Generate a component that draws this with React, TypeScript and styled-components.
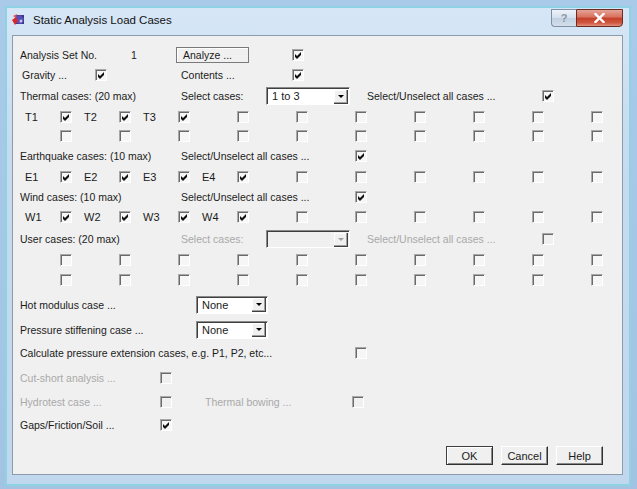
import React from 'react';
import styled, { createGlobalStyle } from 'styled-components';

const GlobalStyle = createGlobalStyle`
  html, body {
    margin: 0;
    padding: 0;
  }
  body {
    width: 637px;
    height: 489px;
    overflow: hidden;
    background: #a6c6e6;
    font-family: "Liberation Sans", Arial, sans-serif;
  }
`;

const Outer = styled.div`
  width: 637px;
  height: 489px;
  box-sizing: border-box;
  padding: 6px 6px 3px 5px;
  background: linear-gradient(180deg, #aacaea 0%, #a3c3e3 100%);
`;

const Frame = styled.div`
  height: 100%;
  box-sizing: border-box;
  border: 2px solid #8fd2e3;
  background: linear-gradient(180deg, #d6e6f6 0%, #c6dbef 30%, #c1d7ed 100%);
  padding: 0 6px 9px 5px;
  display: flex;
  flex-direction: column;
`;

const TitleBar = styled.div`
  height: 27px;
  flex-shrink: 0;
  display: flex;
  align-items: flex-start;
`;

const TitleIcon = styled.svg`
  width: 13px;
  height: 13px;
  margin-top: 5px;
  flex-shrink: 0;
`;

const TitleText = styled.div`
  margin-left: 8px;
  line-height: 24px;
  font-size: 11.5px;
  color: #111;
`;

const CaptionButtons = styled.div`
  margin-left: auto;
  margin-top: 1px;
  display: flex;
`;

const HelpCaption = styled.div`
  width: 25px;
  height: 18px;
  box-sizing: border-box;
  border: 1px solid #7f90a6;
  border-right: none;
  border-radius: 0 0 0 4px;
  background: linear-gradient(180deg, #eef3f9 0%, #d5e0ec 50%, #c2d1e1 51%, #d3deea 100%);
  color: #8a97a8;
  font-size: 11px;
  font-weight: bold;
  display: flex;
  align-items: center;
  justify-content: center;
`;

const CloseCaption = styled.div`
  width: 47px;
  height: 18px;
  box-sizing: border-box;
  border: 1px solid #6b2b22;
  border-radius: 0 0 4px 0;
  background: linear-gradient(180deg, #e5a497 0%, #d8705d 45%, #c3402a 50%, #d0563f 80%, #e0907f 100%);
  display: flex;
  align-items: center;
  justify-content: center;
`;

const Panel = styled.div`
  flex: 1;
  background: #f0f0f0;
  border: 1px solid #8d9cad;
  padding: 9px 9px 0 7px;
  display: flex;
  flex-direction: column;
  font-size: 10.5px;
  color: #1b1b1b;
`;

const Row = styled.div<{ $h: number }>`
  height: ${(p) => p.$h}px;
  flex-shrink: 0;
  display: flex;
  align-items: center;
`;

const Cell = styled.div<{ $w: number; $dim?: boolean; $pl?: number }>`
  width: ${(p) => p.$w}px;
  flex-shrink: 0;
  box-sizing: border-box;
  padding-left: ${(p) => p.$pl ?? 0}px;
  white-space: nowrap;
  color: ${(p) => (p.$dim ? '#a9a9a9' : 'inherit')};
`;

const CaseRow = styled.div<{ $h: number }>`
  height: ${(p) => p.$h}px;
  flex-shrink: 0;
  display: grid;
  grid-template-columns: repeat(10, 59px);
  align-items: center;
  padding-left: 5px;
`;

const CaseCell = styled.div`
  display: flex;
  align-items: center;
`;

const CaseLabel = styled.span`
  width: 35px;
  flex-shrink: 0;
  font-size: 11px;
`;

const Box = styled.span<{ $disabled?: boolean }>`
  width: 12px;
  height: 12px;
  flex-shrink: 0;
  box-sizing: border-box;
  display: inline-flex;
  align-items: flex-start;
  justify-content: flex-start;
  background: ${(p) => (p.$disabled ? '#f0f0f0' : '#f6f6f6')};
  border-top: 1px solid #a8a8a8;
  border-left: 1px solid #a8a8a8;
  border-right: 1px solid #ffffff;
  border-bottom: 1px solid #ffffff;
  box-shadow: inset 1px 1px 0 #6a6a6a;
`;

const Tick = styled.svg`
  width: 7px;
  height: 7px;
  margin: 2px 0 0 2px;
`;

const Check = ({ on, disabled }: { on?: boolean; disabled?: boolean }) => (
  <Box $disabled={disabled}>
    {on && (
      <Tick viewBox="0 0 7 7">
        <polygon points="0,2 2,4 6,0 6,3 2,7 0,5" fill="#111" />
      </Tick>
    )}
  </Box>
);

const SelectBox = styled.div<{ $w: number; $disabled?: boolean }>`
  width: ${(p) => p.$w}px;
  height: 18px;
  flex-shrink: 0;
  box-sizing: border-box;
  display: flex;
  align-items: center;
  background: ${(p) => (p.$disabled ? '#f0f0f0' : '#ffffff')};
  border-top: 1px solid #8a8a8a;
  border-left: 1px solid #8a8a8a;
  border-right: 1px solid #ffffff;
  border-bottom: 1px solid #ffffff;
  box-shadow: inset 1px 1px 0 #3f3f3f;
`;

const SelectText = styled.span`
  flex: 1;
  padding-left: 5px;
  font-size: 11px;
`;

const DropButton = styled.span<{ $disabled?: boolean }>`
  width: 14px;
  height: 14px;
  margin-right: 1px;
  margin-top: 1px;
  box-sizing: border-box;
  background: #f0f0f0;
  border-right: 1px solid #404040;
  border-bottom: 1px solid #404040;
  box-shadow: inset -1px -1px 0 #a0a0a0, inset 1px 1px 0 #ffffff;
  display: flex;
  align-items: center;
  justify-content: center;

  &::after {
    content: '';
    width: 0;
    height: 0;
    border-left: 3px solid transparent;
    border-right: 3px solid transparent;
    border-top: 3px solid ${(p) => (p.$disabled ? '#a0a0a0' : '#000')};
  }
`;

const Select = ({ w, value, disabled }: { w: number; value?: string; disabled?: boolean }) => (
  <SelectBox $w={w} $disabled={disabled}>
    <SelectText>{value}</SelectText>
    <DropButton $disabled={disabled} />
  </SelectBox>
);

const FlatButton = styled.div<{ $w: number }>`
  width: ${(p) => p.$w}px;
  height: 16px;
  flex-shrink: 0;
  box-sizing: border-box;
  border: 1px solid #7a7a7a;
  box-shadow: inset 1px 1px 0 #ffffff;
  padding-left: 6px;
  line-height: 14px;
  white-space: nowrap;
`;

const ButtonRow = styled.div`
  margin-top: 10px;
  display: flex;
  justify-content: flex-end;
  gap: 8px;
  padding-right: 10px;
`;

const DialogButton = styled.div<{ $default?: boolean }>`
  width: 47px;
  height: 19px;
  box-sizing: border-box;
  display: flex;
  align-items: center;
  justify-content: center;
  font-size: 11px;
  background: #f0f0f0;
  border-top: 1px solid ${(p) => (p.$default ? '#404040' : '#ffffff')};
  border-left: 1px solid ${(p) => (p.$default ? '#404040' : '#ffffff')};
  border-right: 1px solid #303030;
  border-bottom: 1px solid #303030;
  box-shadow: ${(p) =>
    p.$default
      ? 'inset 1px 1px 0 #ffffff, inset -1px -1px 0 #8a8a8a'
      : 'inset -1px -1px 0 #8a8a8a'};
`;

type CaseDef = { label?: string; on?: boolean };

const CaseLine = ({ h, cases }: { h: number; cases: CaseDef[] }) => (
  <CaseRow $h={h}>
    {cases.map((c, i) => (
      <CaseCell key={i}>
        <CaseLabel>{c.label}</CaseLabel>
        <Check on={c.on} />
      </CaseCell>
    ))}
  </CaseRow>
);

const makeCases = (prefix: string, count: number): CaseDef[] =>
  Array.from({ length: 10 }, (_, i) =>
    i < count ? { label: `${prefix}${i + 1}`, on: true } : {}
  );

const App: React.FC = () => {
  return (
    <>
      <GlobalStyle />
      <Outer>
        <Frame>
          <TitleBar>
            <TitleIcon viewBox="0 0 13 13">
              <rect x="3" y="2" width="9" height="9" fill="#3d3a8c" />
              <path d="M3 4 L8 2 L12 6 L9 11 L4 10 Z" fill="#5a4fb8" />
              <path d="M0 7 L4 4 L6 8 L3 12 Z" fill="#d62a2a" />
              <path d="M1 3 L5 1 L4 5 Z" fill="#e65050" />
              <circle cx="9" cy="8" r="1.5" fill="#c7c2f0" />
            </TitleIcon>
            <TitleText>Static Analysis Load Cases</TitleText>
            <CaptionButtons>
              <HelpCaption>?</HelpCaption>
              <CloseCaption>
                <svg width="11" height="10" viewBox="0 0 11 10">
                  <path d="M1.5 1 L9.5 9 M9.5 1 L1.5 9" stroke="#ffffff" strokeWidth="2.4" strokeLinecap="square" />
                </svg>
              </CloseCaption>
            </CaptionButtons>
          </TitleBar>

          <Panel>
            <Row $h={20}>
              <Cell $w={111}>Analysis Set No.</Cell>
              <Cell $w={45}>1</Cell>
              <FlatButton $w={73}>Analyze ...</FlatButton>
              <Cell $w={43} />
              <Check on />
            </Row>
            <Row $h={19}>
              <Cell $w={75} $pl={2}>Gravity ...</Cell>
              <Check on />
              <Cell $w={74} />
              <Cell $w={111}>Contents ...</Cell>
              <Check on />
            </Row>
            <Row $h={24}>
              <Cell $w={161}>Thermal cases: (20 max)</Cell>
              <Cell $w={85}>Select cases:</Cell>
              <Select w={84} value="1 to 3" />
              <Cell $w={17} />
              <Cell $w={175}>Select/Unselect all cases ...</Cell>
              <Check on />
            </Row>
            <CaseLine h={17} cases={makeCases('T', 3)} />
            <CaseLine h={21} cases={makeCases('T', 0)} />
            <Row $h={20}>
              <Cell $w={161}>Earthquake cases: (10 max)</Cell>
              <Cell $w={174}>Select/Unselect all cases ...</Cell>
              <Check on />
            </Row>
            <CaseLine h={21} cases={makeCases('E', 4)} />
            <Row $h={20}>
              <Cell $w={161}>Wind cases: (10 max)</Cell>
              <Cell $w={174}>Select/Unselect all cases ...</Cell>
              <Check on />
            </Row>
            <CaseLine h={20} cases={makeCases('W', 4)} />
            <Row $h={24}>
              <Cell $w={161}>User cases: (20 max)</Cell>
              <Cell $w={85} $dim>Select cases:</Cell>
              <Select w={84} disabled />
              <Cell $w={17} />
              <Cell $w={175} $dim>Select/Unselect all cases ...</Cell>
              <Check disabled />
            </Row>
            <CaseLine h={17} cases={makeCases('U', 0)} />
            <CaseLine h={23} cases={makeCases('U', 0)} />
            <Row $h={27}>
              <Cell $w={176}>Hot modulus case ...</Cell>
              <Select w={72} value="None" />
            </Row>
            <Row $h={23}>
              <Cell $w={176}>Pressure stiffening case ...</Cell>
              <Select w={72} value="None" />
            </Row>
            <Row $h={24}>
              <Cell $w={335}>Calculate pressure extension cases, e.g. P1, P2, etc...</Cell>
              <Check />
            </Row>
            <Row $h={25}>
              <Cell $w={140} $dim>Cut-short analysis ...</Cell>
              <Check disabled />
            </Row>
            <Row $h={24}>
              <Cell $w={140} $dim>Hydrotest case ...</Cell>
              <Check disabled />
              <Cell $w={33} />
              <Cell $w={147} $dim>Thermal bowing ...</Cell>
              <Check disabled />
            </Row>
            <Row $h={22}>
              <Cell $w={140}>Gaps/Friction/Soil ...</Cell>
              <Check on />
            </Row>
            <ButtonRow>
              <DialogButton $default>OK</DialogButton>
              <DialogButton>Cancel</DialogButton>
              <DialogButton>Help</DialogButton>
            </ButtonRow>
          </Panel>
        </Frame>
      </Outer>
    </>
  );
};

export default App;
